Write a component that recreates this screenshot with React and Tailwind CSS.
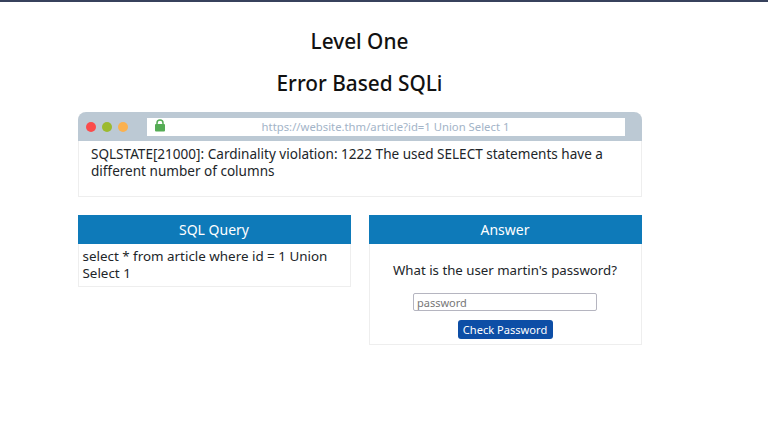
import React from 'react'

function Panel({ title, children }) {
  return (
    <div className="w-[273px] self-start border border-[#eeeeee] bg-white">
      <div className="h-[29px] -mt-px -mx-px bg-[#0e7ab9] text-white text-[14px] leading-[29px] text-center">{title}</div>
      {children}
    </div>
  )
}

function App() {
  return (
    <div className="min-h-[448px] bg-white text-[#212529] font-['Noto_Sans',sans-serif]">
      <div className="h-[2px] bg-[#37415c]"></div>
      <div className="w-[564px] ml-[77.5px]">
        <h1 className="mt-[25px] text-[20.8px] leading-[28px] font-medium text-center text-[#111]">Level One</h1>
        <h2 className="mt-[14px] text-[20.8px] leading-[28px] font-medium text-center text-[#111]">Error Based SQLi</h2>

        <div className="mt-[15px] border border-[#eeeeee] border-t-0 rounded-t-lg h-[85px]">
          <div className="h-[29px] -mx-px bg-[#bcc9d4] rounded-t-lg flex items-center pl-[8px]">
            <span className="w-[10px] h-[10px] rounded-full bg-[#fb4b4b]"></span>
            <span className="w-[10px] h-[10px] rounded-full bg-[#9cba2f] ml-[6px]"></span>
            <span className="w-[10px] h-[10px] rounded-full bg-[#fbb14f] ml-[6px]"></span>
            <div className="relative w-[478px] h-[18px] ml-[19px] bg-white text-[#a3b4c8] text-[11.3px] leading-[18px] text-center">
              <svg className="absolute left-[7px] top-[1px]" width="12" height="13" viewBox="0 0 12 13">
                <path d="M3 6V4a3 3 0 0 1 6 0v2" fill="none" stroke="#55ac55" strokeWidth="1.5" />
                <rect x="1" y="5" width="10" height="7.5" rx="1" fill="#55ac55" />
              </svg>
              https://website.thm/article?id=1 Union Select 1
            </div>
          </div>
          <p className="pl-[12.5px] pr-[13px] pt-[4.5px] text-[13.55px] leading-[17px]">SQLSTATE[21000]: Cardinality violation: 1222 The used SELECT statements have a different number of columns</p>
        </div>

        <div className="mt-[18px] flex justify-between">
          <Panel title="SQL Query">
            <p className="px-[4px] pt-[4px] pb-[4px] text-[13.4px] leading-[17px]">select * from article where id = 1 Union Select 1</p>
          </Panel>
          <Panel title="Answer">
            <div className="h-[100px] flex flex-col items-center">
              <p className="mt-[18px] text-[13.25px] leading-[17px]">What is the user martin's password?</p>
              <input placeholder="password" className="mt-[14px] w-[184px] h-[18px] px-[3px] border border-[#b5b5c0] rounded-[2px] text-[11px] placeholder:text-[#777]" />
              <button className="mt-[9px] w-[95px] h-[19px] bg-[#0d4ea6] text-white text-[11.1px] leading-[19px] rounded-[3px]">Check Password</button>
            </div>
          </Panel>
        </div>
      </div>
    </div>
  )
}

export default App
